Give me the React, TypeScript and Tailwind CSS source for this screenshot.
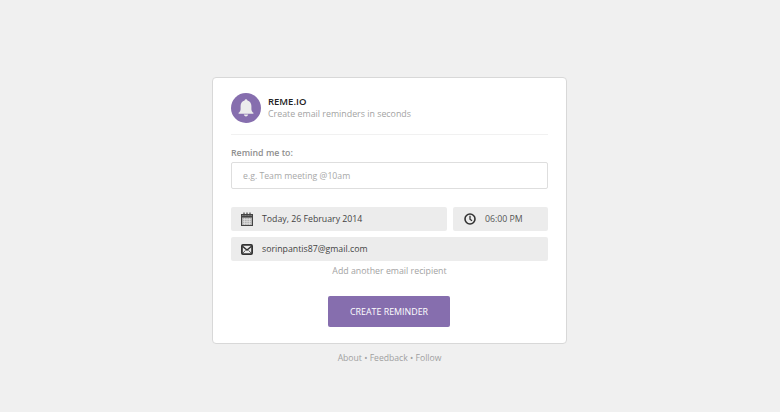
const font = "font-['Open_Sans',sans-serif]";

const App = () => {
  return (
    <div className={`${font} min-h-[412px] bg-[#f0f0f0] pt-[77px] pl-[212px]`}>
      <div className="w-[355px] h-[267px] bg-white border border-[#d8d8d8] rounded-[4px] pt-[14px] px-[18px]">
        <div className="flex items-center h-[31px]">
          <div className="w-[30px] h-[30px] rounded-full bg-[#866eae] flex items-center justify-center">
            <svg width="20" height="20" viewBox="0 0 20 20" fill="#ececec">
              <path d="M10 1.2c-.8 0-1.4.6-1.4 1.3C6 3.2 4.6 5.4 4.6 8v3.2c0 1.6-.8 2.7-2 3.6v.9h14.8v-.9c-1.2-.9-2-2-2-3.6V8c0-2.6-1.4-4.8-4-5.5 0-.7-.6-1.3-1.4-1.3z" />
              <path d="M7.8 16.6h4.4c-.2 1.1-1.1 1.9-2.2 1.9s-2-.8-2.2-1.9z" />
            </svg>
          </div>
          <div className="ml-[7px]">
            <div className="text-[9.5px] leading-[13px] font-semibold text-[#222]">REME.IO</div>
            <div className="text-[8.85px] leading-[12px] text-[#a3a3a3]">Create email reminders in seconds</div>
          </div>
        </div>
        <div className="mt-[11px] border-t border-[#f1f1f1]" />
        <div className="mt-[12px] text-[8.8px] leading-[13px] font-semibold text-[#8f8f8f]">Remind me to:</div>
        <input
          placeholder="e.g. Team meeting @10am"
          className="mt-[2px] block w-full h-[27px] bg-white border border-[#dedede] rounded-[2px] px-[11px] text-[8.7px] placeholder:text-[#a8a8a8] outline-none"
        />
        <div className="mt-[18px] flex gap-[6px]">
          <div className="flex-1 h-[24px] bg-[#ececec] rounded-[2px] flex items-center pl-[10px]">
            <svg width="12" height="14" viewBox="0 0 12 14" fill="none" stroke="#444">
              <rect x="0.5" y="2.5" width="11" height="11" fill="#b4b4b4" strokeWidth="1" />
              <path d="M0.5 4.5h11" strokeWidth="2" />
              <path d="M3 0.5v3M6 0.5v3M9 0.5v3" strokeWidth="1.2" />
              <path d="M2 7.5h8M2 9.5h8M2 11.5h8M3.5 6v7M6 6v7M8.5 6v7" stroke="#e4e4e4" strokeWidth="0.6" />
            </svg>
            <span className="ml-[9px] mt-[2px] text-[8.75px] text-[#444]">Today, 26 February 2014</span>
          </div>
          <div className="w-[95px] h-[24px] bg-[#ececec] rounded-[2px] flex items-center pl-[11px]">
            <svg width="12" height="12" viewBox="0 0 12 12" fill="none" stroke="#333" strokeWidth="1.6">
              <circle cx="6" cy="6" r="5" />
              <path d="M6 2.8v3.4l2 1.5" strokeWidth="1.3" />
            </svg>
            <span className="ml-[9px] mt-[2px] text-[8.75px] text-[#555]">06:00 PM</span>
          </div>
        </div>
        <div className="mt-[6px] h-[24px] bg-[#ececec] rounded-[2px] flex items-center pl-[10px]">
          <svg width="12" height="11" viewBox="0 0 12 11" fill="none" stroke="#333">
            <rect x="0.9" y="0.9" width="10.2" height="9.2" rx="1" strokeWidth="1.8" />
            <path d="M1.5 2.2L6 6l4.5-3.8" strokeWidth="1.5" />
            <path d="M1.5 9.5l3-3.2M10.5 9.5l-3-3.2" strokeWidth="0.8" />
          </svg>
          <span className="ml-[9px] mt-[2px] text-[8.75px] text-[#444]">sorinpantis87@gmail.com</span>
        </div>
        <div className="mt-[3px] text-center text-[8.8px] leading-[15px] text-[#a3a3a3]">Add another email recipient</div>
        <div className="mt-[17px] flex justify-center">
          <button className="w-[122px] h-[31px] mr-[1px] bg-[#866eae] rounded-[2px] text-[8.9px] text-white">CREATE REMINDER</button>
        </div>
      </div>
      <div className="mt-[7px] w-[355px] text-center text-[8.65px] leading-[15px] text-[#a0a0a0]">About • Feedback • Follow</div>
    </div>
  );
};

export default App;
